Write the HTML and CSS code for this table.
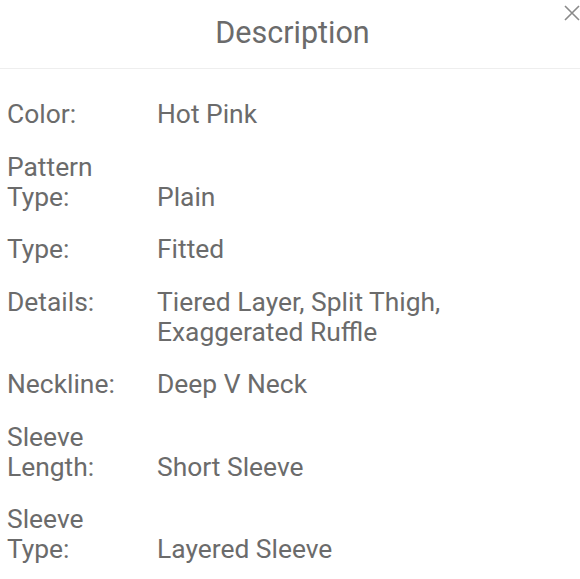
FILE: index.html
```html
<!DOCTYPE html>
<html>
<head>
<meta charset="utf-8">
<link rel="stylesheet" href="styles.css">
</head>
<body>
<div class="modal">
  <div class="header">
    <h2 class="title">Description</h2>
    <button class="close" aria-label="Close">
      <svg width="16" height="16" viewBox="0 0 16 16"><path d="M1 1L15 15M15 1L1 15" stroke="#8a8a8a" stroke-width="1.6" fill="none"/></svg>
    </button>
  </div>
  <div class="list">
    <div class="row"><div class="label">Color:</div><div class="value">Hot Pink</div></div>
    <div class="row"><div class="label">Pattern Type:</div><div class="value">Plain</div></div>
    <div class="row"><div class="label">Type:</div><div class="value">Fitted</div></div>
    <div class="row"><div class="label">Details:</div><div class="value">Tiered Layer, Split Thigh, Exaggerated Ruffle</div></div>
    <div class="row"><div class="label">Neckline:</div><div class="value">Deep V Neck</div></div>
    <div class="row"><div class="label">Sleeve Length:</div><div class="value">Short Sleeve</div></div>
    <div class="row"><div class="label">Sleeve Type:</div><div class="value">Layered Sleeve</div></div>
  </div>
</div>
</body>
</html>
```
FILE: styles.css
```css
html, body {
  margin: 0;
  padding: 0;
  background: #fff;
  overflow: hidden;
}
.modal {
  width: 585px;
  font-family: Roboto, "Liberation Sans", sans-serif;
  color: #6b6b6b;
}
.header {
  position: relative;
  height: 68px;
  border-bottom: 1px solid #eeeeee;
  display: flex;
  align-items: center;
  justify-content: center;
}
.title {
  margin: 0;
  font-size: 30.5px;
  font-weight: 400;
  line-height: 36px;
  color: #6b6b6b;
  padding-bottom: 2px;
}
.close {
  position: absolute;
  top: 5px;
  right: 5px;
  width: 16px;
  height: 16px;
  padding: 0;
  border: 0;
  background: none;
  display: flex;
}
.list {
  padding: 30px 8px 0 7px;
  display: flex;
  flex-direction: column;
  gap: 22.5px;
}
.row {
  display: flex;
  font-size: 26.4px;
  line-height: 30px;
}
.label {
  width: 130px;
  flex: none;
  margin-right: 20px;
  align-self: flex-start;
}
.value {
  width: 310px;
  align-self: flex-end;
}
```
